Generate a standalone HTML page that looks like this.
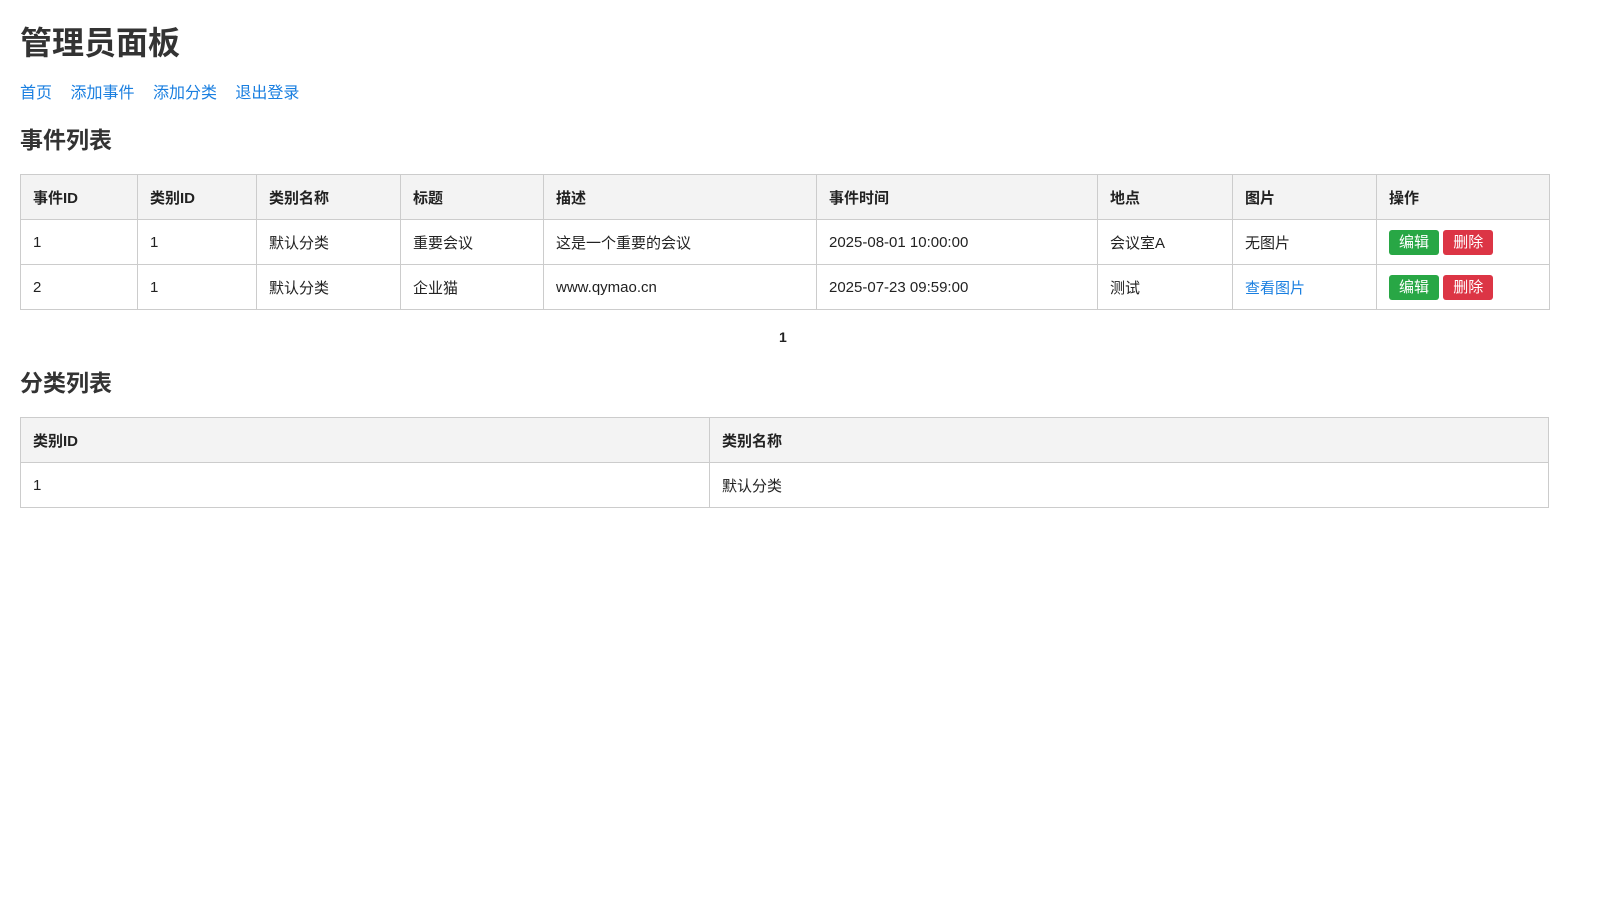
<!DOCTYPE html>
<html><head><meta charset="utf-8"><style>
body{margin:0;padding:0 20px;font-family:"Liberation Sans","Noto Sans CJK SC",sans-serif;color:#222;background:#fff;}
h1{position:absolute;left:20px;top:23px;margin:0;font-size:32px;line-height:40px;color:#333;font-weight:bold;}
.nav{position:absolute;left:20px;top:84px;font-size:16px;line-height:20px;}
.nav a{color:#1a7fe0;text-decoration:none;margin-right:14px;}
h2{position:absolute;left:20px;margin:0;font-size:23px;line-height:30px;color:#333;}
table{position:absolute;left:20px;width:1529px;border-collapse:collapse;font-size:15px;table-layout:fixed;}
th,td{border:1px solid #ccc;padding:0 12px;height:44px;text-align:left;}
th{background:#f3f3f3;font-weight:bold;}
.b{display:inline-block;color:#fff;font-size:15px;padding:0 10px;height:25px;line-height:25px;border-radius:3px;}
.g{background:#28a745}.r{background:#dc3545;margin-left:0px}
.pg{position:absolute;left:779px;top:329px;font-size:14px;font-weight:bold;}
a.l{color:#1a7fe0;text-decoration:none}
</style></head><body>
<h1>管理员面板</h1>
<div class="nav"><a>首页</a> <a>添加事件</a> <a>添加分类</a> <a>退出登录</a></div>
<h2 style="top:125px">事件列表</h2>
<table style="top:174px">
<colgroup><col style="width:117px"><col style="width:119px"><col style="width:144px"><col style="width:143px"><col style="width:273px"><col style="width:281px"><col style="width:135px"><col style="width:144px"><col style="width:173px"></colgroup>
<tr><th>事件ID</th><th>类别ID</th><th>类别名称</th><th>标题</th><th>描述</th><th>事件时间</th><th>地点</th><th>图片</th><th>操作</th></tr>
<tr><td>1</td><td>1</td><td>默认分类</td><td>重要会议</td><td>这是一个重要的会议</td><td>2025-08-01 10:00:00</td><td>会议室A</td><td>无图片</td><td><span class="b g">编辑</span> <span class="b r">删除</span></td></tr>
<tr><td>2</td><td>1</td><td>默认分类</td><td>企业猫</td><td>www.qymao.cn</td><td>2025-07-23 09:59:00</td><td>测试</td><td><a class="l">查看图片</a></td><td><span class="b g">编辑</span> <span class="b r">删除</span></td></tr>
</table>
<div class="pg">1</div>
<h2 style="top:368px">分类列表</h2>
<table style="top:417px">
<colgroup><col style="width:689px"><col></colgroup>
<tr><th>类别ID</th><th>类别名称</th></tr>
<tr><td>1</td><td>默认分类</td></tr>
</table>
</body></html>
